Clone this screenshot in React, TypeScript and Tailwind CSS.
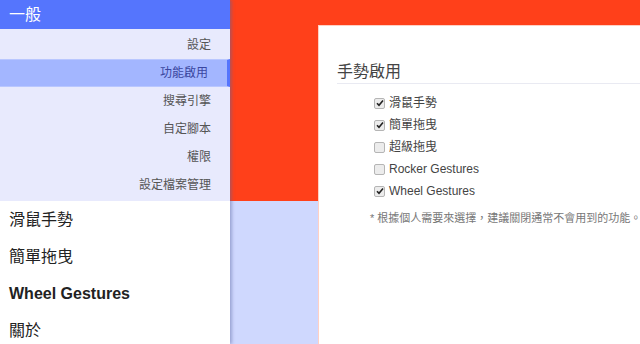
const SUB_ITEMS = ['設定', '功能啟用', '搜尋引擎', '自定腳本', '權限', '設定檔案管理'];

const SECTIONS = [
  { label: '滑鼠手勢', bold: false },
  { label: '簡單拖曳', bold: false },
  { label: 'Wheel Gestures', bold: true },
  { label: '關於', bold: false },
];

const OPTIONS = [
  { label: '滑鼠手勢', checked: true },
  { label: '簡單拖曳', checked: true },
  { label: '超級拖曳', checked: false },
  { label: 'Rocker Gestures', checked: false },
  { label: 'Wheel Gestures', checked: true },
];

const FONT = "font-['Liberation_Sans','Noto_Sans_CJK_TC',sans-serif]";

function Checkbox({ checked }: { checked: boolean }) {
  return (
    <span className="w-[11px] h-[11px] rounded-[2px] border border-[#b5b5b5] bg-[#ececec] flex items-center justify-center shrink-0">
      {checked && (
        <svg width="8" height="8" viewBox="0 0 8 8">
          <path d="M1 4.2 L3 6.3 L7 1.5" fill="none" stroke="#222" strokeWidth="1.6" />
        </svg>
      )}
    </span>
  );
}

export default function App() {
  return (
    <div className={`w-[640px] h-[344px] overflow-hidden flex ${FONT}`}>
      {/* Sidebar */}
      <div className="w-[230px] shrink-0 flex flex-col bg-white relative z-10 shadow-[2px_0_3px_rgba(90,100,160,0.45)]">
        <div className="h-[29px] shrink-0 bg-[#5575fd] text-white text-[16px] pl-[9px] flex items-center">一般</div>
        <div className="bg-[#e8eafd] py-[2px] shrink-0 flex flex-col">
          {SUB_ITEMS.map((item) => {
            const active = item === '功能啟用';
            return (
              <div
                key={item}
                className={
                  active
                    ? 'h-[28px] shrink-0 flex items-center justify-end pr-[19px] text-[12px] text-[#3a46a0] bg-[#a3b6ff] border-y border-[#b9c7ff] border-r-[3px] border-r-[#5575fd]'
                    : 'h-[28px] shrink-0 flex items-center justify-end pr-[19px] text-[12px] text-[#555]'
                }
              >
                {item}
              </div>
            );
          })}
        </div>
        <div className="flex flex-col shrink-0">
          {SECTIONS.map((s) => (
            <div
              key={s.label}
              className={`h-[37px] shrink-0 flex items-center pl-[9px] text-[16px] text-[#222] ${s.bold ? 'font-bold' : ''}`}
            >
              {s.label}
            </div>
          ))}
        </div>
      </div>

      {/* Main */}
      <div className="flex-1 pt-[25px] pl-[88px] bg-[linear-gradient(to_bottom,#ff401a_201px,#cfd8fe_201px)]">
        <div className="h-full bg-white border-l border-t border-[#ffd0c4] pt-[34px] pl-[18px]">
          <div className="text-[16px] leading-[23px] text-[#444] border-b border-[#e9eaf2]">手勢啟用</div>
          <div className="pl-[37px] pt-[8px] flex flex-col">
            {OPTIONS.map((o) => (
              <div key={o.label} className="h-[22px] flex items-center gap-[4px] text-[12px] text-[#444]">
                <Checkbox checked={o.checked} />
                <span>{o.label}</span>
              </div>
            ))}
          </div>
          <div className="pl-[33px] pt-[8px] text-[11px] text-[#777] whitespace-nowrap">
            * 根據個人需要來選擇，建議關閉通常不會用到的功能。
          </div>
        </div>
      </div>
    </div>
  );
}
